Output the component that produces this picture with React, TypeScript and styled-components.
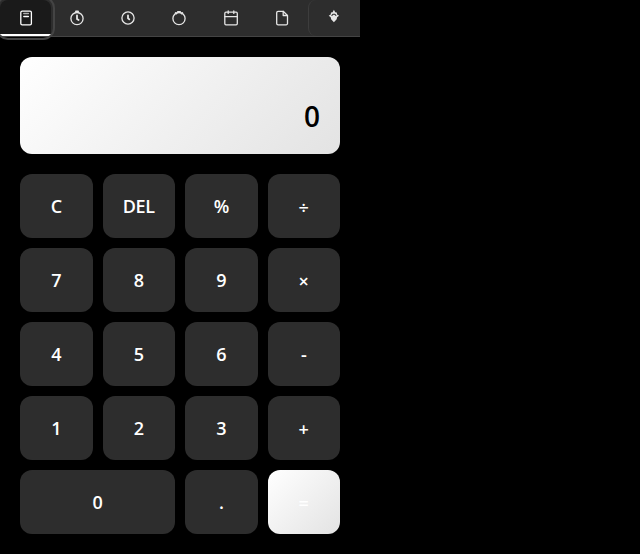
import React, { useState } from "react";
import styled, { createGlobalStyle, css } from "styled-components";

const GlobalStyle = createGlobalStyle`
  * { box-sizing: border-box; }
  body { margin: 0; background: #000; overflow: hidden; }
`;

const Popup = styled.main`
  width: 360px;
  height: 554px;
  background: #000;
  font-family: "Open Sans", "Noto Sans", sans-serif;
`;

const TabBar = styled.nav`
  display: grid;
  grid-template-columns: repeat(6, 51.25px) 1fr;
  height: 37px;
  background: #2d2d2d;
  border-bottom: 1px solid #444;
`;

const Tab = styled.button<{ $active?: boolean; $separated?: boolean }>`
  display: flex;
  align-items: center;
  justify-content: center;
  padding: 0;
  border: 0;
  background: transparent;
  color: #e6e6e6;
  ${(p) =>
    p.$active &&
    css`
      position: relative;
      width: 51px;
      height: 36px;
      padding-top: 2px;
      background: #1a1a1a;
      color: #fff;
      border-bottom: 2px solid #fff;
      border-radius: 8px 8px 0 0;
      &::after {
        content: "";
        position: absolute;
        inset: -4px -4px -6px -4px;
        border: 2px solid #444;
        border-radius: 12px;
      }
    `}
  ${(p) =>
    p.$separated &&
    css`
      border-left: 1px solid #3d3d3d;
      border-radius: 8px;
    `}
`;

const Icon = styled.svg`
  display: block;
  width: 20px;
  height: 20px;
  flex: none;
  fill: none;
  stroke: currentColor;
  stroke-width: 1.3;
  stroke-linecap: round;
  stroke-linejoin: round;
`;

const Content = styled.section`
  display: flex;
  flex-direction: column;
  gap: 20px;
  padding: 20px;
`;

const Display = styled.output`
  display: flex;
  align-items: flex-end;
  justify-content: flex-end;
  height: 97px;
  padding: 20px 20px 21px;
  border-radius: 12px;
  background: linear-gradient(135deg, #fff 0%, #e3e3e3 100%);
  color: #000;
  font-size: 28px;
  font-weight: 600;
  line-height: 34px;
`;

const Keypad = styled.div`
  display: grid;
  grid-template-columns: repeat(4, 1fr);
  grid-auto-rows: 64px;
  gap: 10px;
`;

const Key = styled.button<{ $wide?: boolean; $accent?: boolean; $symbol?: boolean }>`
  grid-column: span ${(p) => (p.$wide ? 2 : 1)};
  padding: ${(p) => (p.$symbol ? "2px 0 0" : "0")};
  border: 0;
  border-radius: 12px;
  background: ${(p) =>
    p.$accent ? "linear-gradient(135deg, #fff 0%, #e3e3e3 100%)" : "#2d2d2d"};
  color: #fff;
  font: 600 18px "Open Sans", "Noto Sans", sans-serif;
  letter-spacing: ${(p) => (p.$symbol ? "0" : "-0.4px")};
`;

const icons: { name: string; art: React.ReactNode }[] = [
  {
    name: "Calculator",
    art: (
      <>
        <rect x="4.8" y="3.1" width="10.6" height="13.8" rx="1.4" />
        <path d="M7.8 5.5h4.6" opacity=".65" strokeWidth="1.5" />
        <path d="M7.8 8.5h4.6" />
      </>
    ),
  },
  {
    name: "Timer",
    art: (
      <>
        <circle cx="10" cy="10.6" r="6.1" />
        <path d="M9 3.6h2" strokeWidth="2" />
        <path d="M10 7.4v3.5l1.6 1.1" strokeWidth="1.8" />
      </>
    ),
  },
  {
    name: "Clock",
    art: (
      <>
        <circle cx="10" cy="10" r="6.1" />
        <path d="M10 7.5v2.8l1.3 1.1" strokeWidth="1.8" />
      </>
    ),
  },
  {
    name: "Stopwatch",
    art: (
      <>
        <circle cx="10" cy="10.6" r="6.1" />
        <path d="M8.8 3.8h2.4M6.6 4.9l.8.6M13.4 4.9l-.8.6" strokeWidth="1.7" />
      </>
    ),
  },
  {
    name: "Calendar",
    art: (
      <>
        <rect x="3.8" y="4.2" width="12.5" height="12.6" rx="1.2" />
        <path d="M3.8 8.6h12.4M7.2 3v2.4M12.8 3v2.4" />
      </>
    ),
  },
  {
    name: "Notes",
    art: (
      <>
        <path d="M11.2 3.3H6.1a1.4 1.4 0 0 0-1.4 1.4v10.7a1.4 1.4 0 0 0 1.4 1.4h8a1.4 1.4 0 0 0 1.4-1.4V7.5z" />
        <path d="M11.2 3.5v4h4" />
      </>
    ),
  },
  {
    name: "Premium",
    art: (
      <>
        <path
          d="M9.9 1.8l1.3 2.4 1.6.4.3 1.8 2 1.3-2 1.5-.4 2-2.8 3-2.8-3-.4-2-2-1.5 2-1.3.3-1.8 1.6-.4z"
          fill="currentColor"
          stroke="none"
        />
        <path d="M7.9 7.3l1-1h2l1 1" stroke="#2d2d2d" strokeWidth="1.1" />
      </>
    ),
  },
];

const keys = [
  "C", "DEL", "%", "÷",
  "7", "8", "9", "×",
  "4", "5", "6", "-",
  "1", "2", "3", "+",
  "0", ".", "=",
];

const operations: Record<string, (a: number, b: number) => number> = {
  "+": (a, b) => a + b,
  "-": (a, b) => a - b,
  "×": (a, b) => a * b,
  "÷": (a, b) => a / b,
};

export default function App() {
  const [value, setValue] = useState("0");
  const [pending, setPending] = useState<{ left: number; op: string } | null>(null);
  const [fresh, setFresh] = useState(true);

  const press = (key: string) => {
    if (key === "C") {
      setValue("0");
      setPending(null);
      setFresh(true);
    } else if (key === "DEL") {
      setValue(value.length > 1 ? value.slice(0, -1) : "0");
    } else if (key === "%") {
      setValue(String(Number(value) / 100));
    } else if (key === "=" || key in operations) {
      const result = pending
        ? operations[pending.op](pending.left, Number(value))
        : Number(value);
      setValue(String(result));
      setPending(key === "=" ? null : { left: result, op: key });
      setFresh(true);
    } else if (key !== "." || fresh || !value.includes(".")) {
      const start = key === "." ? "0" : "";
      setValue((fresh || (value === "0" && key !== ".") ? start : value) + key);
      setFresh(false);
    }
  };

  return (
    <Popup>
      <GlobalStyle />
      <TabBar>
        {icons.map(({ name, art }, i) => (
          <Tab
            key={name}
            aria-label={name}
            $active={i === 0}
            $separated={i === icons.length - 1}
          >
            <Icon viewBox="0 0 20 20">{art}</Icon>
          </Tab>
        ))}
      </TabBar>
      <Content>
        <Display>{value}</Display>
        <Keypad>
          {keys.map((key) => (
            <Key
              key={key}
              $wide={key === "0"}
              $accent={key === "="}
              $symbol={"÷×+=".includes(key)}
              onClick={() => press(key)}
            >
              {key}
            </Key>
          ))}
        </Keypad>
      </Content>
    </Popup>
  );
}
